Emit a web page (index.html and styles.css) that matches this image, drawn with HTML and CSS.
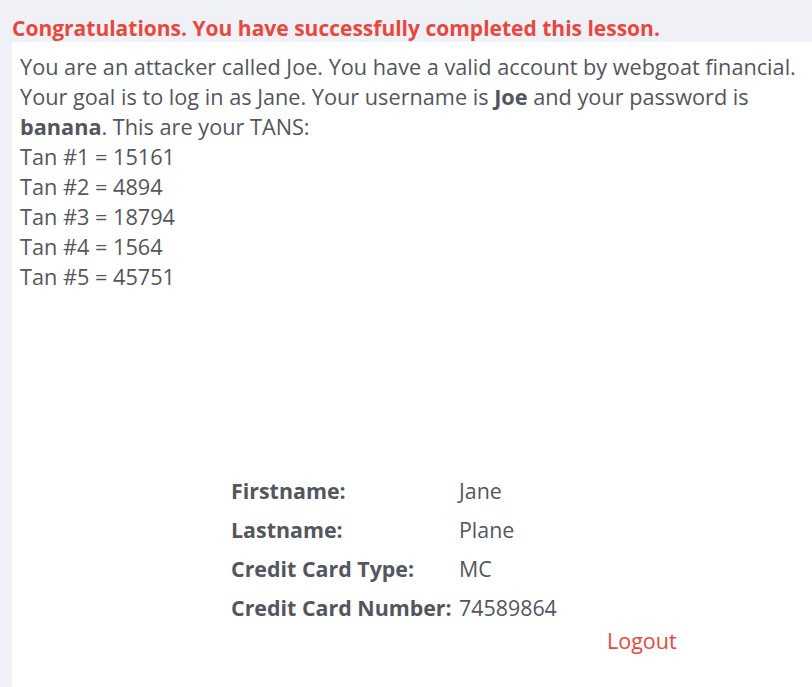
FILE: index.html
```html
<!DOCTYPE html>
<html>
<head>
<meta charset="utf-8">
<link rel="stylesheet" href="styles.css">
</head>
<body>
<div class="page">
  <h1 class="feedback">Congratulations. You have successfully completed this lesson.</h1>
  <div class="panel">
    <p class="intro">You are an attacker called Joe. You have a valid account by webgoat financial. Your goal is to log in as Jane. Your username is <b>Joe</b> and your password is <b>banana</b>. This are your TANS:<br>Tan #1 = 15161<br>Tan #2 = 4894<br>Tan #3 = 18794<br>Tan #4 = 1564<br>Tan #5 = 45751</p>
    <div class="details">
      <div class="label">Firstname:</div><div class="value">Jane</div>
      <div class="label">Lastname:</div><div class="value">Plane</div>
      <div class="label">Credit Card Type:</div><div class="value">MC</div>
      <div class="label">Credit Card Number:</div><div class="value">74589864</div>
    </div>
    <div class="actions"><a class="logout" href="#">Logout</a></div>
  </div>
</div>
</body>
</html>
```
FILE: styles.css
```css
html, body {
  margin: 0;
  padding: 0;
  background: #f0f1f6;
  height: 100%;
}
.page {
  display: flex;
  flex-direction: column;
  height: 100%;
  font-family: "Open Sans", "Noto Sans", sans-serif;
  color: #53565c;
}
.feedback {
  margin: 0;
  padding: 14px 0 0 12px;
  height: 28px;
  font-size: 21px;
  line-height: 28px;
  font-weight: 700;
  color: #e8483b;
}
.panel {
  flex: 1;
  margin-left: 12px;
  background: #fff;
  border-top-left-radius: 4px;
  padding: 10px 8px 0 8px;
}
.intro {
  margin: 0;
  font-size: 21.7px;
  line-height: 30px;
}
.intro b { font-weight: 700; }
.details {
  display: grid;
  grid-template-columns: 228px auto;
  row-gap: 9px;
  margin: 184px 0 0 211px;
  font-size: 21.4px;
  line-height: 30px;
}
.label { font-weight: 700; }
.actions {
  display: flex;
  justify-content: flex-start;
  padding: 3px 0 0 587px;
}
.logout {
  color: #e8483b;
  text-decoration: none;
  font-size: 21.5px;
  line-height: 30px;
}
```
